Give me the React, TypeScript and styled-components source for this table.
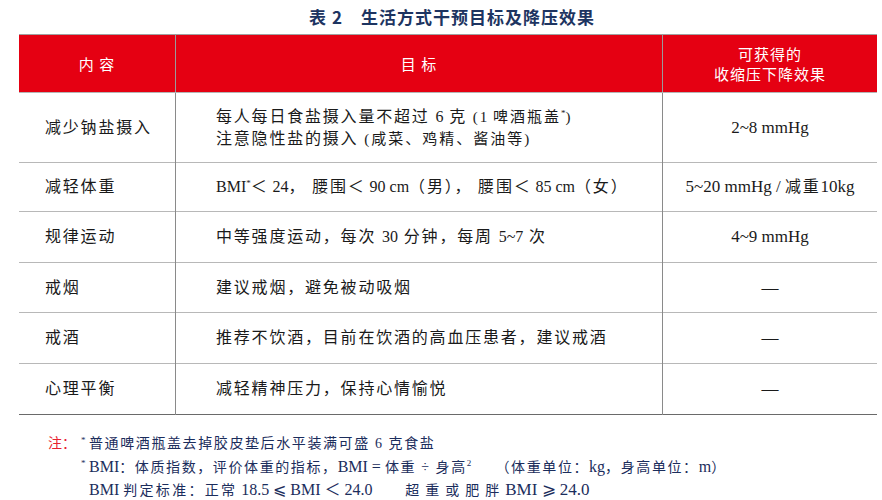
import styled, { createGlobalStyle } from 'styled-components';

const GlobalStyle = createGlobalStyle`
  html, body {
    margin: 0;
    padding: 0;
    background: #ffffff;
  }
`;

const Page = styled.div`
  width: 882px;
  height: 500px;
  box-sizing: border-box;
  padding: 0 7px 0 19px;
  overflow: hidden;
`;

const Title = styled.h2`
  margin: 0;
  height: 32px;
  padding-left: 10px;
  display: flex;
  align-items: center;
  justify-content: center;
  font-family: "Noto Sans CJK SC", "Noto Sans", sans-serif;
  font-size: 17px;
  font-weight: 700;
  color: #1d3461;
  letter-spacing: 1px;
`;

const Table = styled.table`
  width: 856px;
  margin-top: 2px;
  border-collapse: collapse;
  table-layout: fixed;
  border-top: 1px solid #a0a0a0;
  border-bottom: 1px solid #6a6a6a;

  tbody tr + tr td {
    border-top: 1px solid #b8b8b8;
  }
`;

const HeadCell = styled.th<{ $w: number }>`
  width: ${(p) => p.$w}px;
  height: 57px;
  padding: 0;
  background: #e50012;
  color: #ffffff;
  font-family: "Noto Sans CJK SC", "Noto Sans", sans-serif;
  font-size: 15px;
  font-weight: 400;
  line-height: 20px;
  letter-spacing: 1px;
  text-align: center;
  border-left: 1px solid #9a9a9a;
  border-bottom: 1px solid #b5b5b5;
  &:first-child {
    border-left: none;
  }
`;

const Row = styled.tr<{ $h: number }>`
  height: ${(p) => p.$h}px;
`;

const Cell = styled.td<{ $align?: 'left' | 'center'; $pad?: number }>`
  padding: 0 0 0 ${(p) => p.$pad ?? 0}px;
  text-align: ${(p) => p.$align ?? 'left'};
  vertical-align: middle;
  white-space: nowrap;
  font-family: "Liberation Serif", "Noto Sans CJK SC", serif;
  font-size: 16px;
  line-height: 22px;
  letter-spacing: 1.8px;
  color: #1a1a1a;
  border-left: 1px solid #8a8a8a;
  &:first-child {
    border-left: none;
  }
`;

const L = styled.span<{ $size?: number }>`
  letter-spacing: 0;
  ${(p) => (p.$size ? `font-size: ${p.$size}px;` : '')}
`;

const Small = styled.span`
  font-size: 15px;
  letter-spacing: 2px;
`;

const Sup = styled.sup`
  font-size: 9px;
  line-height: 0;
  letter-spacing: 0;
  vertical-align: 6px;
`;

const Dash = styled.span`
  font-family: "Liberation Serif", serif;
  font-size: 17px;
  letter-spacing: 0;
`;

const Notes = styled.div`
  display: grid;
  grid-template-columns: 33px 8px auto;
  padding: 18px 0 0 29px;
  font-family: "Liberation Serif", "Noto Sans CJK SC", serif;
  font-size: 14px;
  line-height: 22.5px;
  color: #1b2d5c;
  letter-spacing: 1.6px;
`;

const NoteLabel = styled.span`
  color: #e8202e;
  letter-spacing: 0;
`;

const Star = styled.span`
  font-size: 9px;
  line-height: 14px;
  align-self: start;
`;

const NoteLine = styled.span<{ $spread?: number }>`
  white-space: pre;
  ${(p) => (p.$spread ? `letter-spacing: ${p.$spread}px;` : '')}
`;

const Wide = styled.span`
  letter-spacing: 6px;
`;

const NoteLatin = styled.span<{ $size?: number }>`
  font-size: ${(p) => p.$size ?? 16}px;
  letter-spacing: 0;
`;

const rows: { name: string; goal: React.ReactNode; effect: React.ReactNode; h: number }[] = [
  {
    name: '减少钠盐摄入',
    goal: (
      <>
        每人每日食盐摄入量不超过 <L>6</L> 克 <Small>(<L>1</L> 啤酒瓶盖<Sup>*</Sup>)</Small>
        <br />
        注意隐性盐的摄入 <Small>(咸菜、鸡精、酱油等)</Small>
      </>
    ),
    effect: <L $size={17}>2~8 mmHg</L>,
    h: 70,
  },
  {
    name: '减轻体重',
    goal: (
      <>
        <L>BMI</L>
        <Sup>*</Sup>＜<L> 24</L>， 腰围＜<L> 90 cm</L>（男）， 腰围＜<L> 85 cm</L>（女）
      </>
    ),
    effect: (
      <>
        <L $size={17}>5~20 mmHg / </L>减重<L $size={17}>10kg</L>
      </>
    ),
    h: 49,
  },
  {
    name: '规律运动',
    goal: (
      <>
        中等强度运动，每次 <L>30</L> 分钟，每周 <L>5~7</L> 次
      </>
    ),
    effect: <L $size={17}>4~9 mmHg</L>,
    h: 51,
  },
  { name: '戒烟', goal: '建议戒烟，避免被动吸烟', effect: <Dash>—</Dash>, h: 50 },
  { name: '戒酒', goal: '推荐不饮酒，目前在饮酒的高血压患者，建议戒酒', effect: <Dash>—</Dash>, h: 51 },
  { name: '心理平衡', goal: '减轻精神压力，保持心情愉悦', effect: <Dash>—</Dash>, h: 51 },
];

export default function App() {
  return (
    <Page>
      <GlobalStyle />
      <Title>表 2　生活方式干预目标及降压效果</Title>
      <Table>
        <thead>
          <tr>
            <HeadCell $w={156}>内 容</HeadCell>
            <HeadCell $w={486}>目 标</HeadCell>
            <HeadCell $w={214}>
              可获得的
              <br />
              收缩压下降效果
            </HeadCell>
          </tr>
        </thead>
        <tbody>
          {rows.map((r) => (
            <Row key={r.name} $h={r.h}>
              <Cell $pad={26}>{r.name}</Cell>
              <Cell $pad={40}>{r.goal}</Cell>
              <Cell $align="center">{r.effect}</Cell>
            </Row>
          ))}
        </tbody>
      </Table>
      <Notes>
        <NoteLabel>注：</NoteLabel>
        <Star>*</Star>
        <NoteLine>普通啤酒瓶盖去掉胶皮垫后水平装满可盛 6 克食盐</NoteLine>
        <span />
        <Star>*</Star>
        <NoteLine>
          <NoteLatin>BMI</NoteLatin>：体质指数，评价体重的指标，<NoteLatin>BMI = </NoteLatin>体重 ÷ 身高<Sup>2</Sup>
          {'　　'}（体重单位：<NoteLatin>kg</NoteLatin>，身高单位：<NoteLatin>m</NoteLatin>）
        </NoteLine>
        <span />
        <span />
        <NoteLine $spread={2.3}>
          <NoteLatin>BMI </NoteLatin>判定标准：正常<NoteLatin> 18.5 ⩽ BMI ＜ 24.0</NoteLatin>
          {'　　'}
          <Wide>超重或肥胖</Wide>
          <NoteLatin $size={17}>BMI ⩾ 24.0</NoteLatin>
        </NoteLine>
      </Notes>
    </Page>
  );
}
